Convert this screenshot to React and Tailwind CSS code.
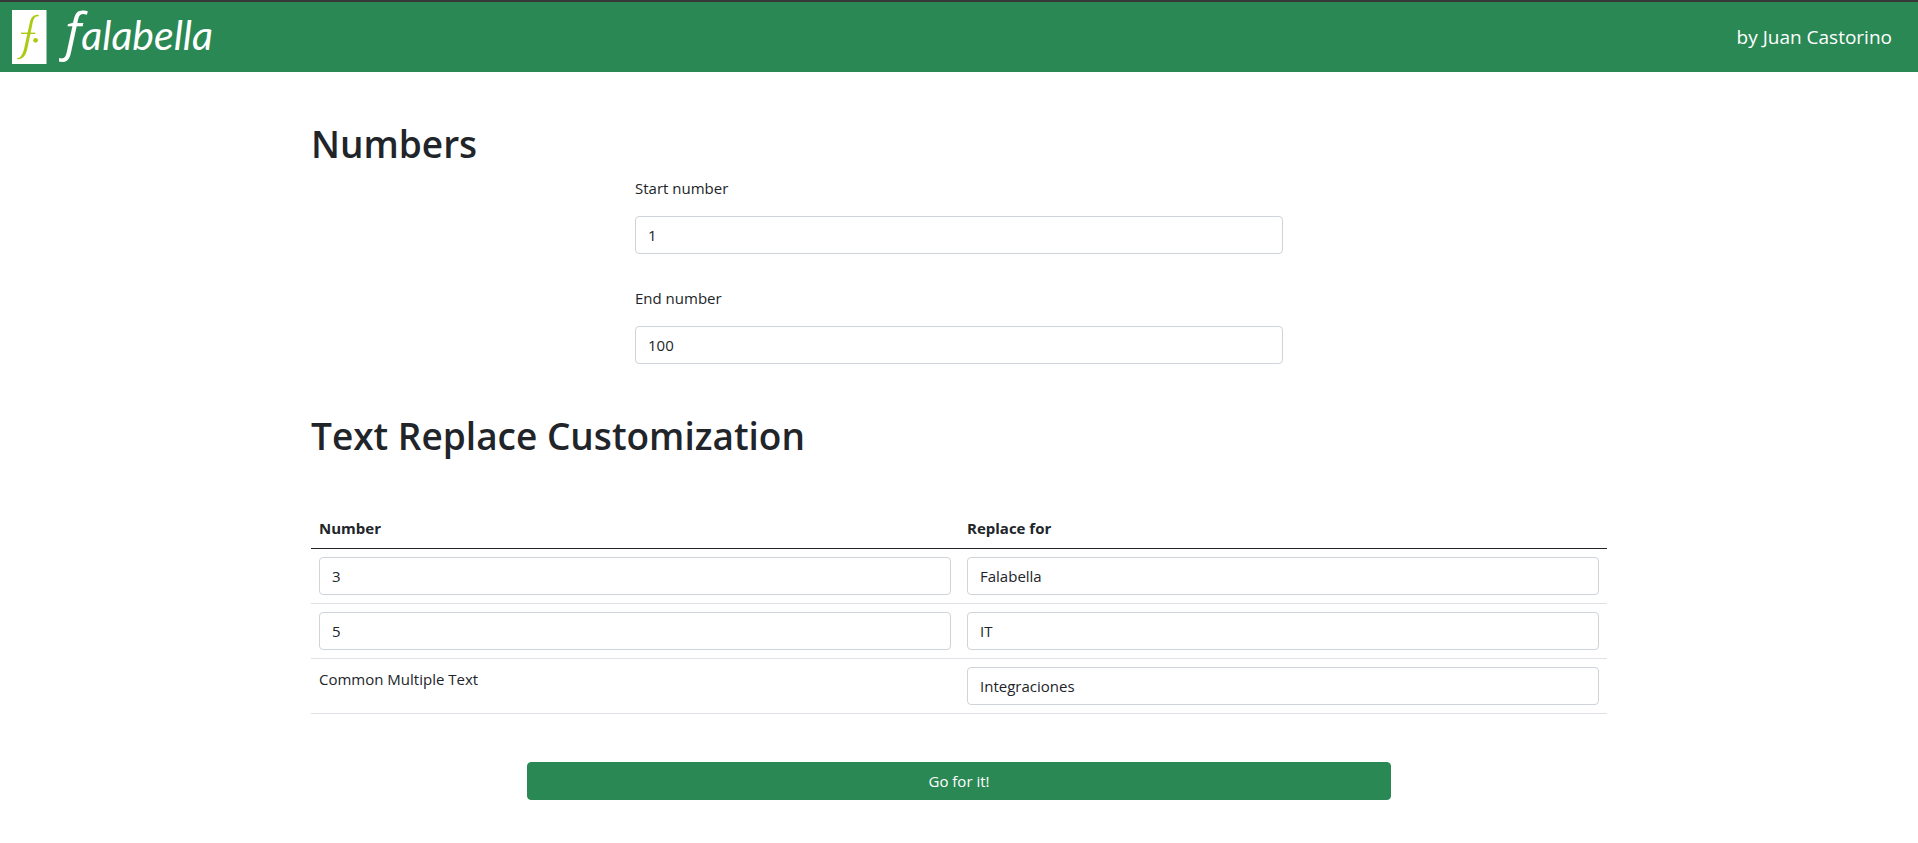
import { useState } from "react";

const inputClass =
  "block w-full rounded border border-[#ced4da] bg-white px-3 py-[6px] leading-6 text-[#212529] outline-none focus:border-[#86b7fe]";

function Logo() {
  return (
    <svg
      role="img"
      aria-label="falabella"
      width="216"
      height="54"
      viewBox="0 0 216 54"
      className="block overflow-visible"
    >
      <rect width="34.500" height="54" fill="#fff" />
      <path
        d="M26.800 4.900C21 4 18.800 8 17.600 13.500L12.600 36.500C11 44 8.800 48 5 48.300L5 49.200C11 49.600 14 45.500 15.600 37.500L20.400 14C21.500 8.800 23 5.800 26.500 6.400Z"
        fill="#aacb12"
      />
      <path d="M9 23.300h14.300" stroke="#aacb12" strokeWidth="1.400" />
      <circle cx="23.600" cy="30.300" r="2.400" fill="#aacb12" />
      <text x="53" y="40" fontSize="41" fontFamily="Lato, sans-serif" fontStyle="italic" fill="#fff">
        <tspan fontSize="52" fontFamily="Open Sans, sans-serif">f</tspan>
        <tspan>alabella</tspan>
      </text>
    </svg>
  );
}

function Field({ id, label, value, onChange }) {
  return (
    <div>
      <label htmlFor={id} className="mb-4 block">
        {label}
      </label>
      <input id={id} type="text" value={value} onChange={(e) => onChange(e.target.value)} className={inputClass} />
    </div>
  );
}

export default function App() {
  const [values, setValues] = useState({
    start: "1",
    end: "100",
    first: "3",
    firstText: "Falabella",
    second: "5",
    secondText: "IT",
    common: "Integraciones",
  });
  const set = (key) => (value) => setValues((v) => ({ ...v, [key]: value }));
  const cell = (key, label) => (
    <input
      type="text"
      aria-label={label}
      value={values[key]}
      onChange={(e) => set(key)(e.target.value)}
      className={inputClass}
    />
  );

  return (
    <div className="bg-white font-['Open_Sans','Noto_Sans',sans-serif] text-[15px] leading-6 text-[#212529]">
      <header className="flex items-center justify-between border-t-2 border-[#373737] bg-[#2a8854] pt-2 pr-[26px] pb-2 pl-3">
        <a href="#">
          <Logo />
        </a>
        <span className="text-[19px] text-white">by Juan Castorino</span>
      </header>

      <main className="mx-auto max-w-[1320px] px-3 pt-12 pb-10">
        <h1 className="mb-2 text-[37px] leading-12 font-semibold">Numbers</h1>
        <div className="mx-auto flex w-1/2 flex-col gap-8">
          <Field id="start" label="Start number" value={values.start} onChange={set("start")} />
          <Field id="end" label="End number" value={values.end} onChange={set("end")} />
        </div>

        <h1 className="my-12 text-[37px] leading-12 font-semibold">Text Replace Customization</h1>
        <table className="w-full table-fixed border-separate border-spacing-0 text-left align-top">
          <thead>
            <tr>
              <th className="border-b border-[#212529] p-2 font-bold">Number</th>
              <th className="border-b border-[#212529] p-2 font-bold">Replace for</th>
            </tr>
          </thead>
          <tbody className="align-top">
            <tr>
              <td className="border-b border-[#dee2e6] p-2">{cell("first", "First number")}</td>
              <td className="border-b border-[#dee2e6] p-2">{cell("firstText", "First replacement")}</td>
            </tr>
            <tr>
              <td className="border-b border-[#dee2e6] p-2">{cell("second", "Second number")}</td>
              <td className="border-b border-[#dee2e6] p-2">{cell("secondText", "Second replacement")}</td>
            </tr>
            <tr>
              <td className="border-b border-[#dee2e6] p-2">
                <label htmlFor="common">Common Multiple Text</label>
              </td>
              <td className="border-b border-[#dee2e6] p-2">
                <input
                  id="common"
                  type="text"
                  value={values.common}
                  onChange={(e) => set("common")(e.target.value)}
                  className={inputClass}
                />
              </td>
            </tr>
          </tbody>
        </table>

        <button
          type="button"
          className="mx-auto mt-12 block w-2/3 cursor-pointer rounded border border-[#2a8854] bg-[#2a8854] px-3 py-[6px] text-white hover:bg-[#237347]"
        >
          Go for it!
        </button>
      </main>
    </div>
  );
}
